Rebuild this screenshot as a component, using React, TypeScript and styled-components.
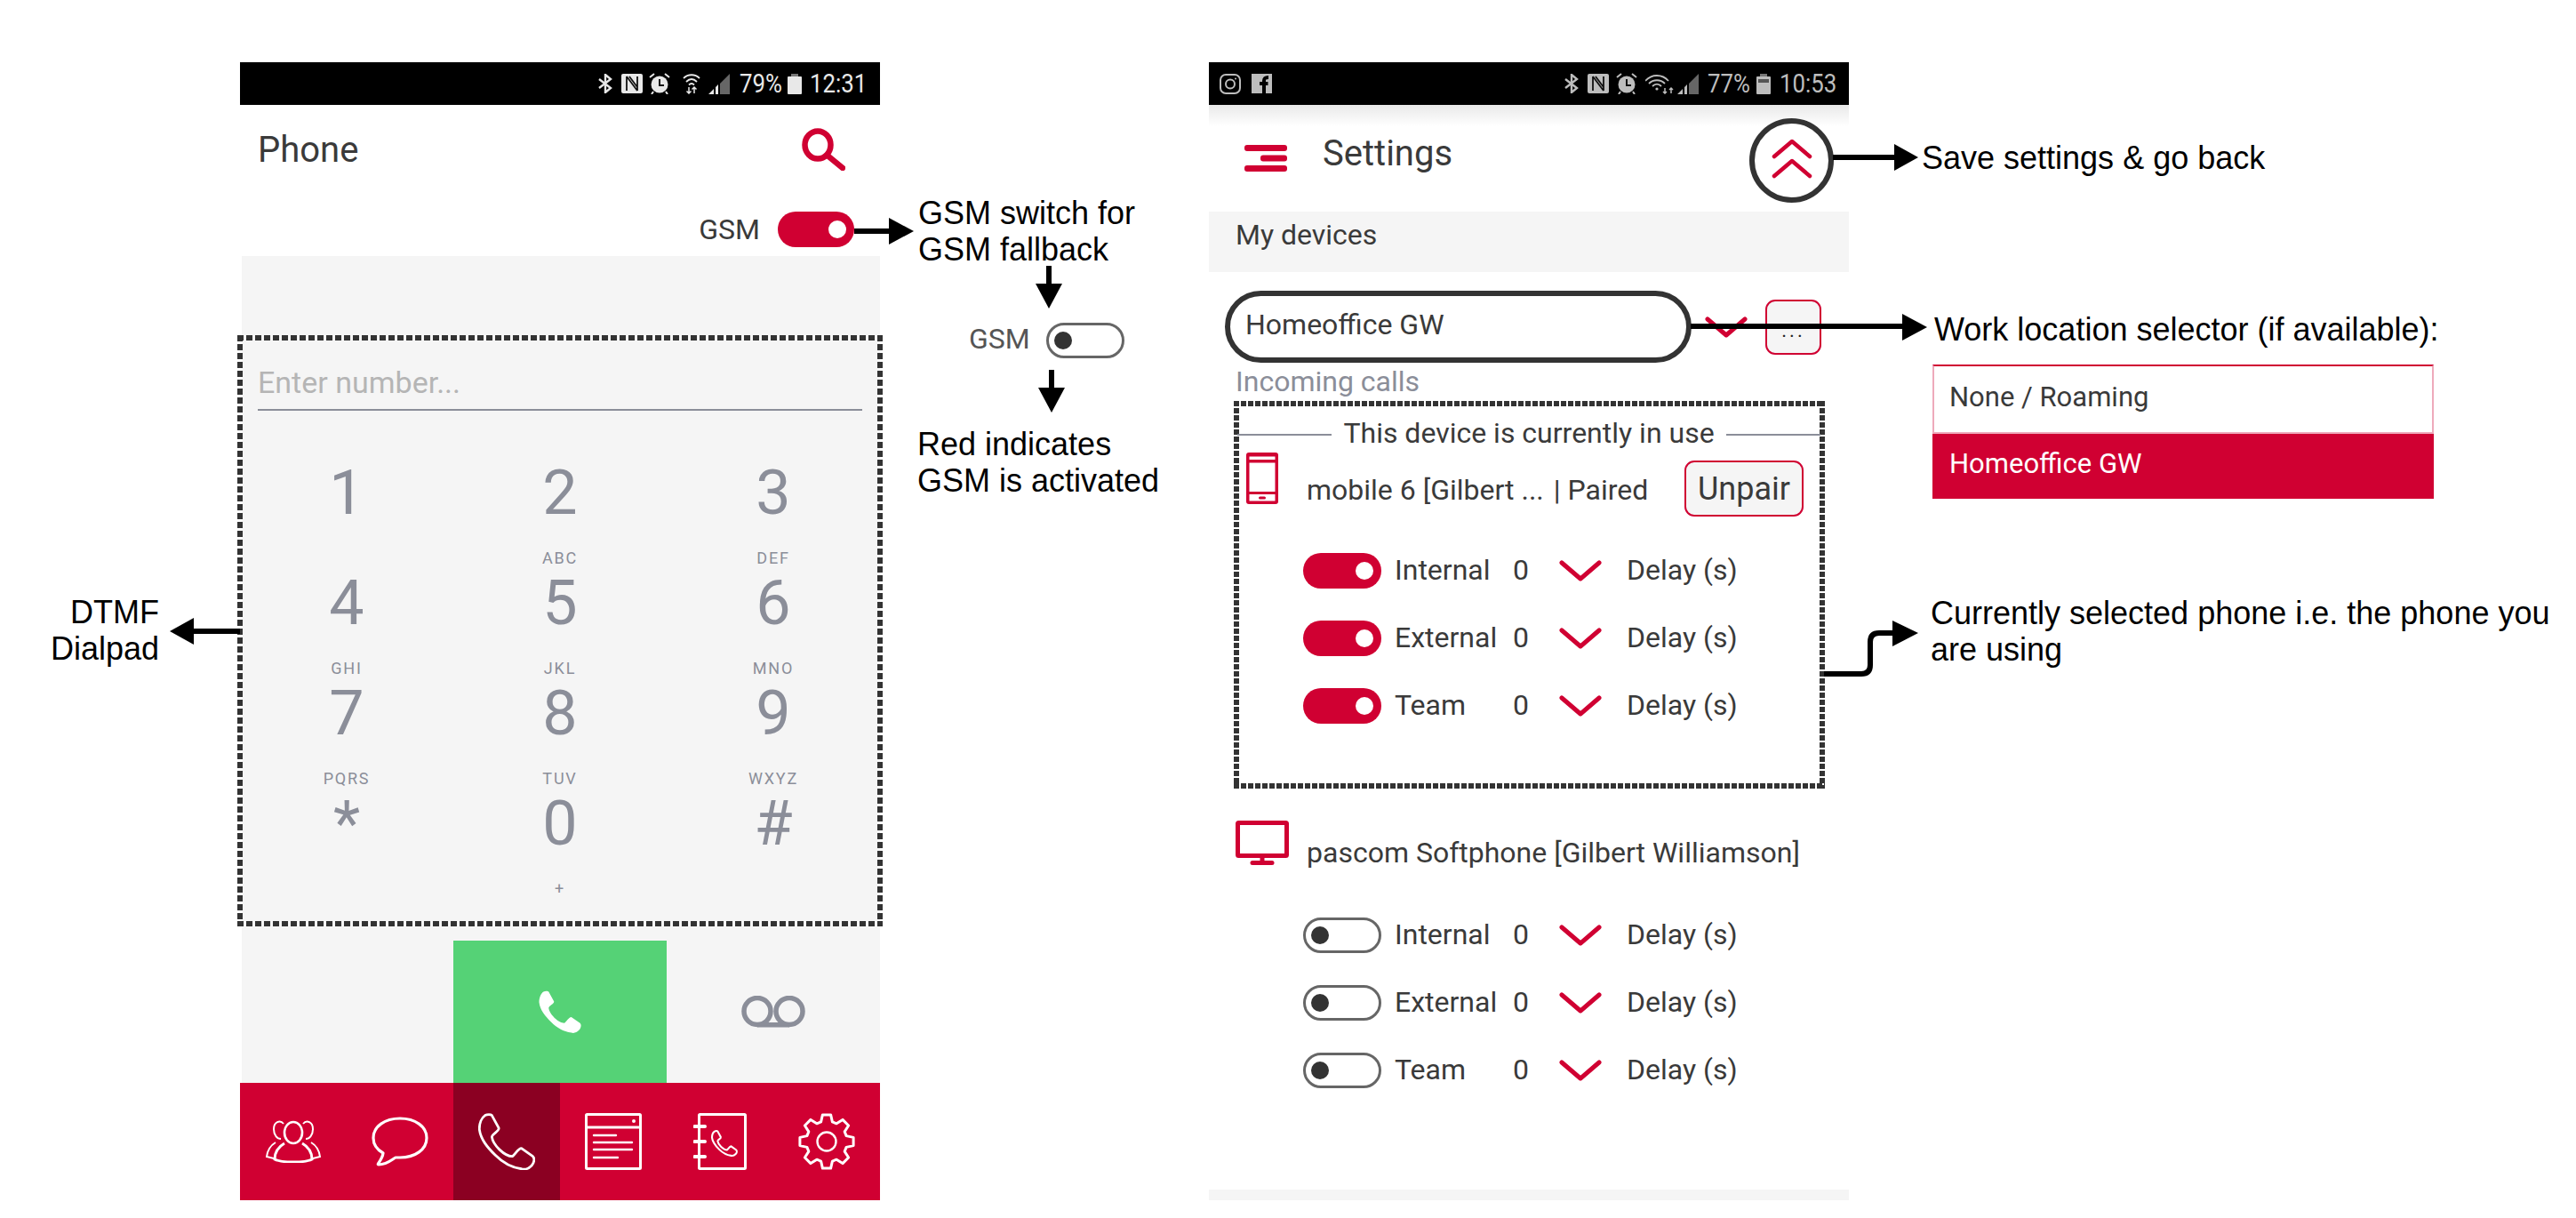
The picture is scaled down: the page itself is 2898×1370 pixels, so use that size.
import React from "react";
import styled, { createGlobalStyle } from "styled-components";

const RED = "#d00032";
const INK = "#3a3a3a";
const SLATE = "#8b8e99";
const PANEL = "#f5f5f5";

const Global = createGlobalStyle`
  html, body { margin: 0; padding: 0; background: #fff; }
  body { font-family: Roboto, "Liberation Sans", sans-serif; color: ${INK}; overflow: hidden; }
  * { box-sizing: border-box; }
`;

const Page = styled.div`
  position: relative;
  width: 2898px;
  height: 1370px;
  display: flex;
  align-items: flex-start;
  gap: 370px;
  padding: 70px 0 0 270px;
  background: #fff;
`;

const Phone = styled.section`
  width: 720px;
  height: 1280px;
  display: flex;
  flex-direction: column;
`;

/* ---------- status bar ---------- */
const StatusBar = styled.div<{ $tone: string; $right: number }>`
  height: 48px;
  flex: none;
  background: #000;
  color: ${(p) => p.$tone};
  display: flex;
  align-items: center;
  padding: 0 ${(p) => p.$right}px 0 12px;
`;
const Slot = styled.span<{ $ml?: number; $auto?: boolean }>`
  display: flex;
  flex: none;
  margin-left: ${(p) => (p.$auto ? "auto" : `${p.$ml ?? 0}px`)};
`;
const StatusText = styled.span<{ $w: number; $ml: number }>`
  flex: none;
  display: block;
  width: ${(p) => p.$w}px;
  margin-left: ${(p) => p.$ml}px;
  font-size: 30px;
  line-height: 34px;
  white-space: nowrap;
  transform: scaleX(0.86);
  transform-origin: left center;
`;

const Bluetooth = () => (
  <svg width="16" height="22" viewBox="0 0 16 22" fill="none" stroke="currentColor" strokeWidth="2.4">
    <path d="M1 6 L14 16 L8 21 V1 L14 6 L1 16" />
  </svg>
);
const NfcMark = () => (
  <svg width="24" height="22" viewBox="0 0 24 22">
    <rect width="24" height="22" rx="2" fill="currentColor" />
    <path d="M6 19V3M18 19V3M6 3L18 19M9 3L18 15" stroke="#111" strokeWidth="1.8" fill="none" />
  </svg>
);
const Alarm = () => (
  <svg width="24" height="24" viewBox="0 0 24 24" fill="none">
    <circle cx="12" cy="13" r="9.5" fill="currentColor" />
    <path d="M12 7V14H17" stroke="#111" strokeWidth="2" />
    <path d="M1 5L6 1M23 5L18 1M5 21L3 24M19 21L21 24" stroke="currentColor" strokeWidth="2" />
  </svg>
);
const WifiNarrow = () => (
  <svg width="20" height="23" viewBox="0 0 20 23" fill="none" stroke="currentColor" strokeWidth="1.8">
    <path d="M1 5C6 0 14 0 19 5M4 9C8 5 12 5 16 9M7 12.5C9 10.5 11 10.5 13 12.5" />
    <path d="M7 15V22M4.5 19.5L7 22L9.5 19.5M13 22V15M10.5 17.5L13 15L15.5 17.5" strokeWidth="1.5" />
  </svg>
);
const WifiWide = () => (
  <svg width="32" height="23" viewBox="0 0 32 23" fill="none" stroke="currentColor" strokeWidth="1.8">
    <path d="M0 8C7 0 19 0 26 8M4 11C9 6 17 6 22 11M8 14C11 11 15 11 18 14" />
    <circle cx="13" cy="17" r="1.6" fill="currentColor" stroke="none" />
    <path d="M22 16V22M20 20L22 22L24 20M29 22V16M27 18L29 16L31 18" strokeWidth="1.5" />
  </svg>
);
const Signal = () => (
  <svg width="24" height="23" viewBox="0 0 24 23" fill="currentColor">
    <path d="M13 11L24 0V23H13Z" fill="#666" />
    <path d="M0 23L6 17V23ZM8 15L11 12V23H8Z" />
  </svg>
);
const Battery = ({ level }: { level?: boolean }) => (
  <svg width="16" height="23" viewBox="0 0 16 23" fill="currentColor">
    <rect x="4" width="8" height="3" fill="#777" />
    <rect y="3" width="16" height="20" rx="1" />
    {level && <rect x="2" y="6" width="12" height="4" fill="#555" />}
  </svg>
);
const Instagram = () => (
  <svg width="24" height="23" viewBox="0 0 24 23" fill="none" stroke="#bdbdbd" strokeWidth="2">
    <rect x="1" y="1" width="22" height="21" rx="6" />
    <circle cx="12" cy="11.5" r="5" />
    <circle cx="18" cy="5.5" r="1" fill="#bdbdbd" stroke="none" />
  </svg>
);
const Facebook = () => (
  <svg width="23" height="22" viewBox="0 0 23 22">
    <rect width="23" height="22" fill="#bdbdbd" />
    <path d="M14 22V8C14 5 15 4 19 4M9 11H18.5" stroke="#000" strokeWidth="4" fill="none" />
  </svg>
);

/* ---------- shared app parts ---------- */
const Toggle = styled.span<{ $on?: boolean }>`
  flex: none;
  width: 88px;
  height: 40px;
  border-radius: 20px;
  display: flex;
  align-items: center;
  justify-content: ${(p) => (p.$on ? "flex-end" : "flex-start")};
  padding: 0 ${(p) => (p.$on ? 9 : 6)}px;
  background: ${(p) => (p.$on ? RED : "#fff")};
  border: ${(p) => (p.$on ? "none" : "3.5px solid #666")};
  &::after {
    content: "";
    width: 20px;
    height: 20px;
    border-radius: 50%;
    background: ${(p) => (p.$on ? "#fff" : "#333")};
  }
`;
const GsmToggle = styled(Toggle)`
  width: 86px;
`;

const Dashed = styled.div<{ $t: number; $dash: number; $gap: number }>`
  background-image:
    repeating-linear-gradient(90deg, #333 0 ${(p) => p.$dash}px, transparent ${(p) => p.$dash}px ${(p) => p.$dash + p.$gap}px),
    repeating-linear-gradient(90deg, #333 0 ${(p) => p.$dash}px, transparent ${(p) => p.$dash}px ${(p) => p.$dash + p.$gap}px),
    repeating-linear-gradient(180deg, #333 0 ${(p) => p.$dash}px, transparent ${(p) => p.$dash}px ${(p) => p.$dash + p.$gap}px),
    repeating-linear-gradient(180deg, #333 0 ${(p) => p.$dash}px, transparent ${(p) => p.$dash}px ${(p) => p.$dash + p.$gap}px);
  background-repeat: no-repeat;
  background-size: 100% ${(p) => p.$t}px, 100% ${(p) => p.$t}px, ${(p) => p.$t}px 100%, ${(p) => p.$t}px 100%;
  background-position: left top, left bottom, left top, right top;
`;

/* ---------- left phone ---------- */
const TopBar = styled.header`
  height: 100px;
  flex: none;
  display: flex;
  justify-content: space-between;
  align-items: flex-start;
  padding: 26px 39px 0 20px;
`;
const PageTitle = styled.h1`
  margin: 1px 0 0;
  font-size: 40px;
  line-height: 47px;
  font-weight: 400;
  color: ${INK};
`;
const GsmRow = styled.div`
  flex: none;
  height: 40px;
  margin: 20px 0 10px;
  padding-right: 29px;
  display: flex;
  justify-content: flex-end;
  align-items: center;
  gap: 20px;
`;
const GsmLabel = styled.span`
  font-size: 32px;
  line-height: 36px;
  color: ${INK};
`;
const Dial = styled.div`
  flex: none;
  height: 930px;
  margin-left: 2px;
  padding-top: 89px;
  background: ${PANEL};
`;
const DialBox = styled(Dashed)`
  height: 665px;
  margin: 0 -3px 0 -5px;
  padding-top: 33px;
`;
const NumberField = styled.div`
  height: 52px;
  margin: 0 23px;
  border-bottom: 2px solid ${SLATE};
  font-size: 34px;
  line-height: 40px;
  color: #b5b5b5;
`;
const Keypad = styled.div`
  margin: 30px 3px 0;
  display: grid;
  grid-template-columns: repeat(3, 240px);
  row-gap: 24px;
`;
const Key = styled.div`
  display: flex;
  flex-direction: column;
  align-items: center;
  color: ${SLATE};
`;
const KeyLetters = styled.span`
  height: 24px;
  font-size: 18px;
  line-height: 24px;
  letter-spacing: 1.8px;
`;
const KeyDigit = styled.span`
  font-size: 70px;
  line-height: 76px;
  font-weight: 400;
`;
const CallRow = styled.div`
  margin-top: 16px;
  height: 160px;
  display: grid;
  grid-template-columns: 238px 240px 240px;
`;
const CallCell = styled.div<{ $green?: boolean }>`
  display: flex;
  align-items: center;
  justify-content: center;
  background: ${(p) => (p.$green ? "#55d276" : "transparent")};
`;
const TabBar = styled.nav`
  flex: none;
  height: 132px;
  display: grid;
  grid-template-columns: repeat(6, 120px);
  background: ${RED};
`;
const Tab = styled.div<{ $active?: boolean }>`
  display: flex;
  align-items: center;
  justify-content: center;
  background: ${(p) => (p.$active ? "#8b0022" : "transparent")};
`;

const HANDSET =
  "M5 1C7 0 10 0 11 1L17 12C18 15 11 17 11 20C12 27 22 37 29 37C31 36 34 30 37 30L47 37C49 39 48 43 46 45C43 48 40 49 37 48C28 47 20 42 14 36C7 29 1 22 0 13C0 8 2 3 5 1Z";

const gearPath = (() => {
  const teeth = 8;
  const pts: string[] = [];
  for (let i = 0; i < teeth; i++) {
    const a = (i * Math.PI * 2) / teeth - Math.PI / 2;
    const step = (Math.PI * 2) / teeth;
    [
      [23, -0.5],
      [30.5, -0.27],
      [30.5, 0.27],
      [23, 0.5],
    ].forEach(([r, f]) => {
      const t = a + f * step * 0.72;
      pts.push(`${(32 + r * Math.cos(t)).toFixed(1)} ${(32 + r * Math.sin(t)).toFixed(1)}`);
    });
  }
  return `M${pts.join("L")}Z`;
})();

const SearchIcon = () => (
  <svg width="49" height="48" viewBox="0 0 49 48" fill="none" stroke={RED} strokeWidth="6.5" strokeLinecap="round">
    <ellipse cx="18" cy="19" rx="14.5" ry="15.5" />
    <path d="M29 31L46 45" />
  </svg>
);
const CallIcon = () => (
  <svg width="48" height="48" viewBox="-0.5 -0.5 49 49">
    <path d={HANDSET} fill="#fff" />
  </svg>
);
const VoicemailIcon = () => (
  <svg width="72" height="36" viewBox="0 0 72 36" fill="none" stroke={SLATE} strokeWidth="5.5">
    <ellipse cx="18" cy="17.5" rx="15" ry="15" />
    <ellipse cx="54" cy="17.5" rx="15" ry="15" />
    <path d="M18 32.8H54" />
  </svg>
);
const ContactsIcon = () => (
  <svg width="64" height="48" viewBox="0 0 64 48" fill="none" stroke="#fff" strokeWidth="2.6">
    <ellipse cx="32" cy="14" rx="10" ry="12" />
    <path d="M22 26C15 30 11 36 11 44C19 48 45 48 53 44C53 36 49 30 42 26" strokeWidth="3" />
    <path d="M21 4C17 -1 10 2 10 10C10 17 14 21 18 21M43 4C47 -1 54 2 54 10C54 17 50 21 46 21" strokeWidth="2" />
    <path d="M12 25C7 28 3 33 2 41L10 43M52 25C57 28 61 33 62 41L54 43" strokeWidth="2" />
  </svg>
);
const ChatIcon = () => (
  <svg width="64" height="56" viewBox="0 0 64 56" fill="none" stroke="#fff" strokeWidth="3.2" strokeLinejoin="round">
    <path d="M13 41C6 37 2 31 2 24C2 11 15 2 32 2C49 2 62 11 62 24C62 37 49 46 32 46H27C22 49 17 54 8 54C5 54 12 49 13 41Z" />
  </svg>
);
const PhoneTabIcon = () => (
  <svg width="64" height="64" viewBox="-1 -1 50 50" fill="none" stroke="#fff" strokeWidth="2.2" strokeLinejoin="round">
    <path d={HANDSET} />
  </svg>
);
const JournalIcon = () => (
  <svg width="64" height="64" viewBox="0 0 64 64" fill="none" stroke="#fff" strokeWidth="3" strokeLinecap="round">
    <rect x="1.5" y="1.5" width="61" height="61" rx="1" />
    <path d="M2 16H62" />
    <circle cx="55" cy="9" r="2" fill="#fff" stroke="none" />
    <path d="M10 25H35M10 33H53M10 41H53M10 50H37" strokeWidth="2.4" />
  </svg>
);
const PhonebookIcon = () => (
  <svg width="60" height="64" viewBox="0 0 60 64" fill="none" stroke="#fff" strokeWidth="3" strokeLinecap="round">
    <rect x="6.5" y="1.5" width="52" height="61" rx="1" />
    <path d="M1.5 15H13M1.5 32H13M1.5 49H13" strokeWidth="4" />
    <path d={HANDSET} transform="translate(21 20) scale(0.58)" strokeWidth="3.6" />
  </svg>
);
const GearIcon = () => (
  <svg width="64" height="64" viewBox="0 0 64 64" fill="none" stroke="#fff" strokeWidth="3" strokeLinejoin="round">
    <path d={gearPath} />
    <circle cx="32" cy="32" r="10.5" strokeWidth="2.4" />
  </svg>
);

/* ---------- right phone ---------- */
const SettingsBar = styled.header`
  height: 120px;
  flex: none;
  display: flex;
  align-items: flex-start;
  padding: 0 17px 0 40px;
  background: linear-gradient(#e9e9e9, #fff 24px);
`;
const Burger = styled.svg`
  margin-top: 45px;
  flex: none;
`;
const SettingsTitle = styled.h1`
  margin: 32px 0 0 40px;
  font-size: 40px;
  line-height: 46px;
  font-weight: 400;
  color: ${INK};
`;
const BackRing = styled.svg`
  margin: 15px 0 0 auto;
  flex: none;
`;
const SectionBand = styled.div`
  height: 68px;
  flex: none;
  padding: 7px 0 0 30px;
  background: ${PANEL};
  font-size: 32px;
  line-height: 38px;
`;
const SelectorRow = styled.div`
  flex: none;
  margin: 21px 0 0 18px;
  display: flex;
  align-items: center;
`;
const LocationPill = styled.div`
  width: 525px;
  height: 81px;
  border: 6px solid #333;
  border-radius: 41px;
  padding: 0 0 5px 17px;
  display: flex;
  align-items: center;
  font-size: 32px;
  line-height: 38px;
`;
const PlainButton = styled.div`
  flex: none;
  background: ${PANEL};
  border: 2px solid ${RED};
  border-radius: 11px;
  color: ${INK};
`;
const MoreButton = styled(PlainButton)`
  width: 63px;
  height: 62px;
  margin-left: 20px;
  text-align: center;
  font-size: 22px;
  line-height: 24px;
  letter-spacing: 3px;
  padding-top: 21px;
  color: #222;
`;
const IncomingLabel = styled.div`
  flex: none;
  margin-top: 2px;
  padding-left: 30px;
  font-size: 32px;
  line-height: 38px;
  color: ${SLATE};
`;
const DeviceBox = styled(Dashed)`
  flex: none;
  width: 665px;
  height: 436px;
  margin: 3px 0 0 28px;
  padding: 17px 5px 0 4px;
`;
const Legend = styled.div`
  display: flex;
  align-items: center;
  gap: 13px;
  font-size: 32px;
  line-height: 38px;
  white-space: nowrap;
  &::before,
  &::after {
    content: "";
    flex: 1;
    height: 2px;
    margin-top: 4px;
    background: ${SLATE};
  }
`;
const DeviceHead = styled.div<{ $left: number; $top: number; $h: number }>`
  display: flex;
  align-items: flex-start;
  height: ${(p) => p.$h}px;
  margin-top: ${(p) => p.$top}px;
  padding-left: ${(p) => p.$left}px;
  font-size: 32px;
  line-height: 38px;
  white-space: nowrap;
`;
const DeviceName = styled.span<{ $top: number; $ml: number }>`
  margin: ${(p) => p.$top}px 0 0 ${(p) => p.$ml}px;
`;
const PairState = styled.span`
  margin-left: 11px;
`;
const UnpairButton = styled(PlainButton)`
  width: 134px;
  height: 63px;
  margin: 9px 19px 0 auto;
  display: flex;
  align-items: center;
  justify-content: center;
  font-size: 36px;
  line-height: 42px;
`;
const Rings = styled.div<{ $left: number; $top: number }>`
  display: flex;
  flex-direction: column;
  gap: 36px;
  margin: ${(p) => p.$top}px 0 0 ${(p) => p.$left}px;
`;
const RingRow = styled.div`
  height: 40px;
  display: flex;
  align-items: center;
  font-size: 32px;
  line-height: 38px;
`;
const RingLabel = styled.span`
  width: 133px;
  margin: 0 0 3px 15px;
`;
const RingDelay = styled.span`
  width: 52px;
  margin-bottom: 3px;
`;
const DelayLabel = styled.span`
  margin: 0 0 2px 28px;
`;
const FootBand = styled.div`
  flex: none;
  height: 12px;
  margin-top: auto;
  background: ${PANEL};
`;

const Chevron = () => (
  <svg width="48" height="24" viewBox="0 0 48 24" fill="none" stroke={RED} strokeWidth="5" strokeLinecap="round" strokeLinejoin="round" style={{ flex: "none" }}>
    <path d="M3 3L24 21L45 3" />
  </svg>
);
const SelectChevron = styled.span`
  display: flex;
  margin-left: 15px;
`;
const MobileIcon = () => (
  <svg width="36" height="58" viewBox="0 0 36 58" style={{ flex: "none" }}>
    <rect width="36" height="58" rx="3" fill={RED} />
    <path d="M3.5 4.5H32.5V8H3.5ZM3.5 11.5H32.5V44H3.5ZM3.5 47H32.5V54.5H3.5Z" fill="#fff" />
    <rect x="14" y="49.5" width="8" height="3" rx="1.5" fill={RED} />
  </svg>
);
const MonitorIcon = () => (
  <svg width="60" height="50" viewBox="0 0 60 50" fill="none" stroke={RED} strokeWidth="5" style={{ flex: "none" }}>
    <rect x="2.5" y="2.5" width="55" height="37" rx="1" />
    <path d="M30 40V47" />
    <path d="M19 47.5H41" strokeLinecap="round" />
  </svg>
);

/* ---------- annotations on the free canvas ---------- */
const Arrows = styled.svg`
  position: absolute;
  left: 0;
  top: 0;
  pointer-events: none;
`;
const Note = styled.div<{ $x: number; $y: number; $w?: number; $end?: boolean }>`
  position: absolute;
  left: ${(p) => p.$x}px;
  top: ${(p) => p.$y}px;
  ${(p) => (p.$w ? `width: ${p.$w}px;` : "")}
  text-align: ${(p) => (p.$end ? "right" : "left")};
  font-family: "Liberation Sans", Arial, sans-serif;
  font-size: 36px;
  line-height: 41px;
  color: #000;
  white-space: nowrap;
`;
const GsmSample = styled.div`
  position: absolute;
  left: 1090px;
  top: 363px;
  display: flex;
  align-items: center;
  gap: 18px;
  font-size: 32px;
  line-height: 36px;
  color: #555;
`;
const SampleLabel = styled.span`
  margin-bottom: 4px;
`;
const LocationList = styled.div`
  position: absolute;
  left: 2174px;
  top: 410px;
  width: 564px;
  font-size: 31px;
  line-height: 36px;
`;
const LocationOption = styled.div<{ $sel?: boolean }>`
  height: ${(p) => (p.$sel ? 73 : 78)}px;
  padding: ${(p) => (p.$sel ? "16px 0 0 19px" : "17px 0 0 17px")};
  background: ${(p) => (p.$sel ? RED : "#fff")};
  color: ${(p) => (p.$sel ? "#fff" : INK)};
  ${(p) => (p.$sel ? "" : `border: 2px solid ${RED}; border-bottom-color: #eab; border-left-color: #eab; border-right-color: #eab;`)}
`;

const KEYS: [string, string][] = [
  ["", "1"], ["", "2"], ["", "3"],
  ["", "4"], ["ABC", "5"], ["DEF", "6"],
  ["GHI", "7"], ["JKL", "8"], ["MNO", "9"],
  ["PQRS", "*"], ["TUV", "0"], ["WXYZ", "#"],
];
const RINGS = ["Internal", "External", "Team"];

const RingList = ({ on, left, top }: { on: boolean; left: number; top: number }) => (
  <Rings $left={left} $top={top}>
    {RINGS.map((r) => (
      <RingRow key={r}>
        <Toggle $on={on} />
        <RingLabel>{r}</RingLabel>
        <RingDelay>0</RingDelay>
        <Chevron />
        <DelayLabel>Delay (s)</DelayLabel>
      </RingRow>
    ))}
  </Rings>
);

export default function App() {
  return (
    <Page>
      <Global />
      <Phone>
        <StatusBar $tone="#e8e8e8" $right={16}>
          <Slot $auto><Bluetooth /></Slot>
          <Slot $ml={10}><NfcMark /></Slot>
          <Slot $ml={7}><Alarm /></Slot>
          <Slot $ml={14}><WifiNarrow /></Slot>
          <Slot $ml={9}><Signal /></Slot>
          <StatusText $w={47} $ml={11}>79%</StatusText>
          <Slot $ml={7}><Battery /></Slot>
          <StatusText $w={63} $ml={9}>12:31</StatusText>
        </StatusBar>
        <TopBar>
          <PageTitle>Phone</PageTitle>
          <SearchIcon />
        </TopBar>
        <GsmRow>
          <GsmLabel>GSM</GsmLabel>
          <GsmToggle $on />
        </GsmRow>
        <Dial>
          <DialBox $t={6} $dash={7} $gap={3}>
            <NumberField>Enter number...</NumberField>
            <Keypad>
              {KEYS.map(([l, d]) => (
                <Key key={d}>
                  <KeyLetters>{l}</KeyLetters>
                  <KeyDigit>{d}</KeyDigit>
                </Key>
              ))}
              <Key />
              <Key><KeyLetters>+</KeyLetters></Key>
            </Keypad>
          </DialBox>
          <CallRow>
            <CallCell />
            <CallCell $green><CallIcon /></CallCell>
            <CallCell><VoicemailIcon /></CallCell>
          </CallRow>
        </Dial>
        <TabBar>
          <Tab><ContactsIcon /></Tab>
          <Tab><ChatIcon /></Tab>
          <Tab $active><PhoneTabIcon /></Tab>
          <Tab><JournalIcon /></Tab>
          <Tab><PhonebookIcon /></Tab>
          <Tab><GearIcon /></Tab>
        </TabBar>
      </Phone>

      <Phone>
        <StatusBar $tone="#bdbdbd" $right={16}>
          <Slot><Instagram /></Slot>
          <Slot $ml={12}><Facebook /></Slot>
          <Slot $auto><Bluetooth /></Slot>
          <Slot $ml={10}><NfcMark /></Slot>
          <Slot $ml={8}><Alarm /></Slot>
          <Slot $ml={9}><WifiWide /></Slot>
          <Slot $ml={4}><Signal /></Slot>
          <StatusText $w={46} $ml={10}>77%</StatusText>
          <Slot $ml={9}><Battery level /></Slot>
          <StatusText $w={62} $ml={10}>10:53</StatusText>
        </StatusBar>
        <SettingsBar>
          <Burger width="48" height="30" viewBox="0 0 48 30" fill={RED}>
            <rect width="48" height="7" rx="3" />
            <rect x="18" y="11.5" width="30" height="7" rx="3" />
            <rect y="23" width="48" height="7" rx="3" />
          </Burger>
          <SettingsTitle>Settings</SettingsTitle>
          <BackRing width="95" height="95" viewBox="0 0 95 95" fill="none">
            <circle cx="47.5" cy="47.5" r="44.5" stroke="#333" strokeWidth="6" />
            <path d="M28 43L48 26L68 43M28 65L48 48L68 65" stroke={RED} strokeWidth="4.5" strokeLinecap="round" strokeLinejoin="round" />
          </BackRing>
        </SettingsBar>
        <SectionBand>My devices</SectionBand>
        <SelectorRow>
          <LocationPill>Homeoffice GW</LocationPill>
          <SelectChevron><Chevron /></SelectChevron>
          <MoreButton>...</MoreButton>
        </SelectorRow>
        <IncomingLabel>Incoming calls</IncomingLabel>
        <DeviceBox $t={6} $dash={6} $gap={2}>
          <Legend>This device is currently in use</Legend>
          <DeviceHead $left={10} $top={3} $h={72}>
            <MobileIcon />
            <DeviceName $top={23} $ml={32}>mobile 6 [Gilbert ...<PairState>| Paired</PairState></DeviceName>
            <UnpairButton>Unpair</UnpairButton>
          </DeviceHead>
          <RingList on left={74} top={41} />
        </DeviceBox>
        <DeviceHead $left={30} $top={36} $h={50}>
          <MonitorIcon />
          <DeviceName $top={17} $ml={20}>pascom Softphone [Gilbert Williamson]</DeviceName>
        </DeviceHead>
        <RingList on={false} left={106} top={59} />
        <FootBand />
      </Phone>

      <Arrows width="2898" height="1370" viewBox="0 0 2898 1370" fill="none" stroke="#000" strokeWidth="6">
        <path d="M961 260H1003M1180 299V322M1183 416V439M270 710H216M2062 177H2134M1902 367H2142" />
        <path d="M2052 758H2094Q2104 758 2104 748V722Q2104 712 2114 712H2131" strokeWidth="6" />
        <g fill="#000" stroke="none">
          <path d="M1000 245L1028 260L1000 275Z" />
          <path d="M1165 319H1195L1180 347Z" />
          <path d="M1168 436H1198L1183 464Z" />
          <path d="M218 695L191 710L218 725Z" />
          <path d="M2131 162L2158 177L2131 192Z" />
          <path d="M2140 353L2168 368L2140 383Z" />
          <path d="M2129 698L2158 712L2129 727Z" />
        </g>
      </Arrows>

      <Note $x={39} $y={668} $w={140} $end>DTMF<br />Dialpad</Note>
      <Note $x={1033} $y={219}>GSM switch for<br />GSM fallback</Note>
      <GsmSample><SampleLabel>GSM</SampleLabel><Toggle /></GsmSample>
      <Note $x={1032} $y={479}>Red indicates<br />GSM is activated</Note>
      <Note $x={2162} $y={157}>Save settings &amp; go back</Note>
      <Note $x={2176} $y={350}>Work location selector (if available):</Note>
      <LocationList>
        <LocationOption>None / Roaming</LocationOption>
        <LocationOption $sel>Homeoffice GW</LocationOption>
      </LocationList>
      <Note $x={2172} $y={669}>Currently selected phone i.e. the phone you<br />are using</Note>
    </Page>
  );
}
